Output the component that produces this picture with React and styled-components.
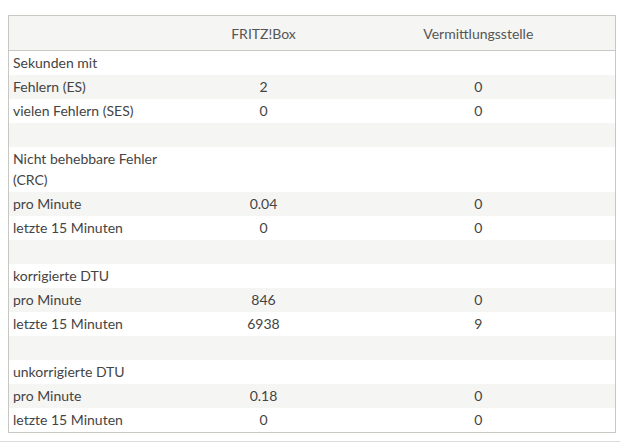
import React from 'react';
import styled, { createGlobalStyle } from 'styled-components';

const GlobalStyle = createGlobalStyle`
  body {
    margin: 0;
    background: #ffffff;
    font-family: 'Lato', 'Open Sans', sans-serif;
  }
`;

const Page = styled.div`
  width: 620px;
  height: 447px;
  padding-top: 15px;
  box-sizing: border-box;
`;

const Table = styled.table`
  margin-left: 8px;
  width: 608px;
  border-collapse: collapse;
  border: 1px solid #c8c8c2;
  table-layout: fixed;
  font-size: 14px;
  color: #444;
`;

const HeadCell = styled.th`
  height: 34px;
  padding: 0 4px;
  font-weight: 400;
  color: #555;
  text-align: ${(props) => (props.left ? 'left' : 'center')};
  background: #f5f5f3;
  border-bottom: 1px solid #c8c8c2;
`;

const Row = styled.tr`
  background: ${(props) => (props.striped ? '#f5f5f3' : '#ffffff')};
`;

const Cell = styled.td`
  padding: 1px 4px 2px;
  line-height: 21px;
  height: 21px;
  text-align: ${(props) => (props.label ? 'left' : 'center')};
  vertical-align: top;
`;

const Divider = styled.div`
  margin-top: 8px;
  height: 1px;
  background: #dcdcdc;
`;

const rows = [
  ['Sekunden mit', '', ''],
  ['Fehlern (ES)', '2', '0'],
  ['vielen Fehlern (SES)', '0', '0'],
  ['', '', ''],
  ['Nicht behebbare Fehler (CRC)', '', ''],
  ['pro Minute', '0.04', '0'],
  ['letzte 15 Minuten', '0', '0'],
  ['', '', ''],
  ['korrigierte DTU', '', ''],
  ['pro Minute', '846', '0'],
  ['letzte 15 Minuten', '6938', '9'],
  ['', '', ''],
  ['unkorrigierte DTU', '', ''],
  ['pro Minute', '0.18', '0'],
  ['letzte 15 Minuten', '0', '0'],
];

const App = () => {
  return (
    <Page>
      <GlobalStyle />
      <Table>
        <colgroup>
          <col style={{ width: '177px' }} />
          <col style={{ width: '156px' }} />
          <col />
        </colgroup>
        <thead>
          <tr>
            <HeadCell left></HeadCell>
            <HeadCell>FRITZ!Box</HeadCell>
            <HeadCell>Vermittlungsstelle</HeadCell>
          </tr>
        </thead>
        <tbody>
          {rows.map((row, index) => (
            <Row key={index} striped={index % 2 === 1}>
              <Cell label>{row[0]}</Cell>
              <Cell>{row[1]}</Cell>
              <Cell>{row[2]}</Cell>
            </Row>
          ))}
        </tbody>
      </Table>
      <Divider />
    </Page>
  );
};

export default App;
